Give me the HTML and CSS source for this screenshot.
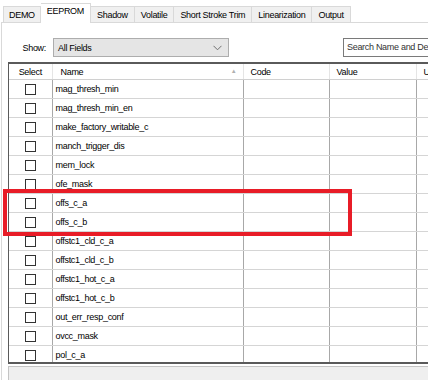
FILE: index.html
```html
<!DOCTYPE html>
<html lang="en">
<head>
  <meta charset="UTF-8" />
  <title>EEPROM</title>
  <link rel="stylesheet" href="styles.css">
</head>
<body>
  <div class="tabs">
    <div class="tab">DEMO</div>
    <div class="tab active">EEPROM</div>
    <div class="tab">Shadow</div>
    <div class="tab">Volatile</div>
    <div class="tab">Short Stroke Trim</div>
    <div class="tab">Linearization</div>
    <div class="tab">Output</div>
  </div>

  <div class="panel">
    <!-- filter bar -->
    <div class="toolbar">
      <label class="show-label">Show:</label>
      <div class="combo">
        <span>All Fields</span>
        <svg class="chevron" width="9" height="6" viewBox="0 0 9 6"><path d="M0.5 0.8 L4.5 4.8 L8.5 0.8" fill="none" stroke="#707070" stroke-width="1"/></svg>
      </div>
      <div class="search">Search Name and Description</div>
    </div>

    <div class="grid">
      <table>
        <colgroup>
          <col class="c-select"><col class="c-name"><col class="c-code"><col class="c-value"><col class="c-unit">
        </colgroup>
        <thead>
          <tr>
            <th class="center">Select</th>
            <th class="sorted">Name <span class="sort">&#9650;</span></th>
            <th>Code</th>
            <th>Value</th>
            <th>Units</th>
          </tr>
        </thead>
        <tbody id="rows"></tbody>
      </table>
    </div>

    <div class="status"></div>
  </div>

  <!-- highlight marker -->
  <div class="marker"></div>

  <script>
    const fields = [
      "mag_thresh_min",
      "mag_thresh_min_en",
      "make_factory_writable_c",
      "manch_trigger_dis",
      "mem_lock",
      "ofe_mask",
      "offs_c_a",
      "offs_c_b",
      "offstc1_cld_c_a",
      "offstc1_cld_c_b",
      "offstc1_hot_c_a",
      "offstc1_hot_c_b",
      "out_err_resp_conf",
      "ovcc_mask",
      "pol_c_a"
    ];

    const tbody = document.getElementById("rows");
    fields.forEach(name => {
      const tr = document.createElement("tr");
      tr.innerHTML = `<td class="center"><span class="check"></span></td><td class="name">${name}</td><td></td><td></td><td></td>`;
      tbody.appendChild(tr);
    });
  </script>
</body>
</html>
```

FILE: styles.css
```css
body {
  margin: 0;
  background-color: #ffffff;
  font-family: "Liberation Sans", Arial, sans-serif;
  font-size: 9px;
  letter-spacing: -0.3px;
  color: #000;
  overflow: hidden;
  width: 428px;
  height: 380px;
  position: relative;
}

.tabs {
  display: flex;
  align-items: flex-end;
  height: 22px;
  padding-left: 3px;
  background-color: #ffffff;
}

.tab {
  height: 15px;
  line-height: 16px;
  padding: 0 6px;
  background-color: #f0f0f0;
  border: 1px solid #d9d9d9;
  border-left: none;
  border-bottom: none;
  color: #000;
  white-space: nowrap;
}

.tab:first-child {
  border-left: 1px solid #d9d9d9;
  padding: 0 5px;
}

.tab.active {
  height: 19px;
  line-height: 15px;
  padding: 0 6px;
  background-color: #ffffff;
  margin-bottom: -1px;
  position: relative;
  z-index: 1;
}

.panel {
  margin-left: 1px;
  border-top: 1px solid #d9d9d9;
  border-left: 1px solid #d9d9d9;
  height: 357px;
}

.toolbar {
  display: flex;
  align-items: center;
  padding-top: 15px;
  height: 19px;
}

.show-label {
  width: 44px;
  text-align: right;
  color: #000;
}

.combo {
  margin-left: 7px;
  width: 164px;
  height: 17px;
  border: 1px solid #adadad;
  background-color: #e5e5e5;
  display: flex;
  align-items: center;
  justify-content: space-between;
  padding: 0 6px 0 4px;
}

.search {
  margin-left: auto;
  width: 90px;
  height: 17px;
  line-height: 17px;
  border: 1px solid #7a7a7a;
  border-right: none;
  padding-left: 3px;
  color: #333;
  white-space: nowrap;
  overflow: hidden;
  margin-right: -9px;
}

.grid {
  margin: 5px 0 0 6px;
  height: 298px;
  border-top: 2px solid #5a5a5a;
  border-bottom: 2px solid #5a5a5a;
  border-left: 1px solid #5a5a5a;
  overflow: hidden;
}

.grid table {
  border-collapse: collapse;
  table-layout: fixed;
  width: 500px;
}

.c-select { width: 43px; }
.c-name { width: 191px; }
.c-code { width: 86px; }
.c-value { width: 87px; }
.c-unit { width: 93px; }

th {
  height: 15px;
  font-weight: normal;
  text-align: left;
  padding: 0 0 0 7px;
  border-right: 1px solid #e5e5e5;
  border-bottom: 1px solid #d0d0d0;
  white-space: nowrap;
}

th.center {
  text-align: center;
  padding: 0;
}

th.sorted {
  position: relative;
  padding-left: 8px;
}

.sort {
  position: absolute;
  right: 6px;
  top: 4px;
  font-size: 6px;
  color: #b0b0b0;
}

td {
  height: 18px;
  padding: 0;
  border-right: 1px solid #a8a8a8;
  border-bottom: 1px solid #d5d5d5;
  white-space: nowrap;
}

td.center {
  text-align: center;
}

td.name {
  padding-left: 3px;
}

.check {
  display: inline-block;
  width: 9px;
  height: 9px;
  border: 1px solid #333;
  background-color: #fff;
  vertical-align: middle;
}

.status {
  margin: 2px 0 0 6px;
  height: 14px;
  border-top: 1px solid #c4c4c4;
  border-left: 1px solid #c4c4c4;
  background-color: #efefef;
}

.marker {
  position: absolute;
  left: 3px;
  top: 189px;
  width: 341px;
  height: 39px;
  border: 4px solid #e81c27;
}
```
